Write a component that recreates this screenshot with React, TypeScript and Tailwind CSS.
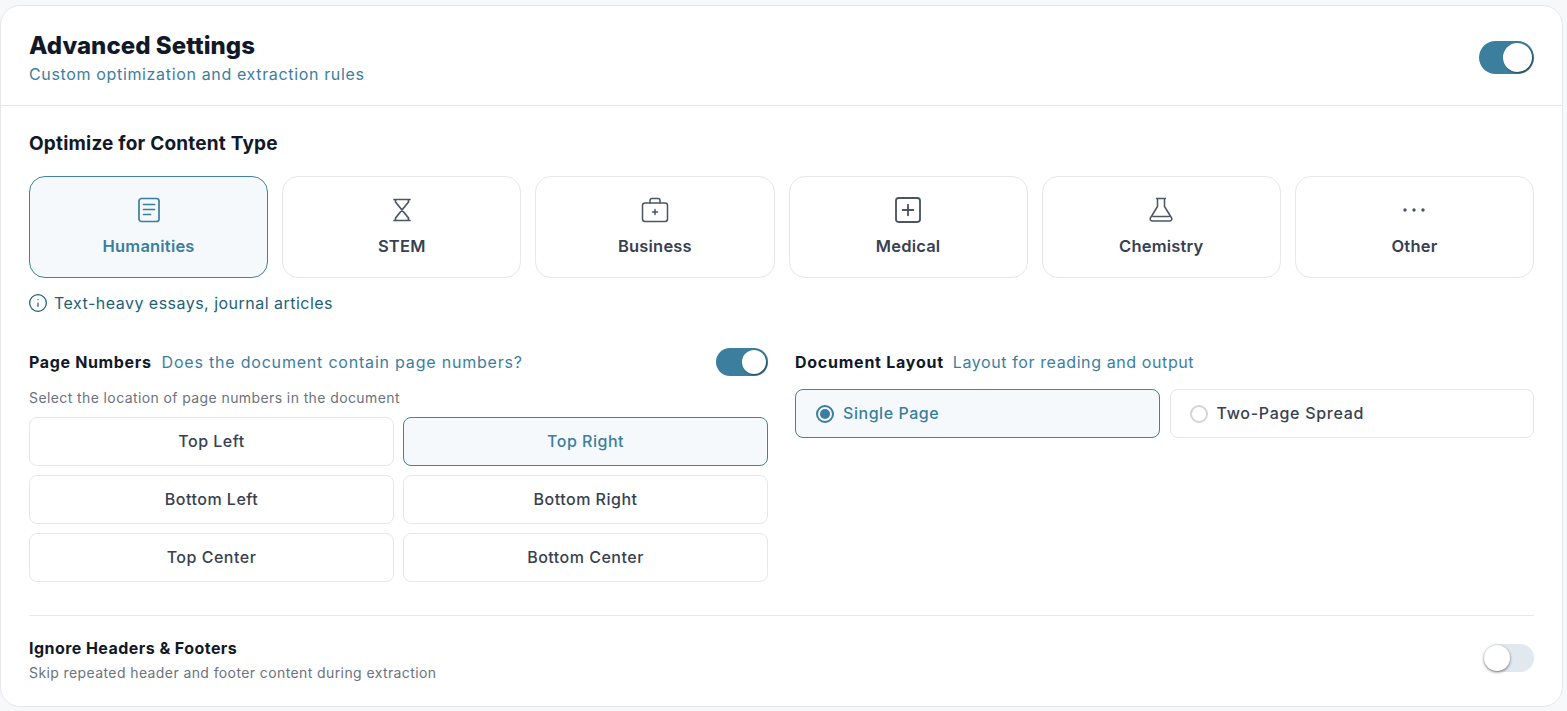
import { Info, SquarePlus } from "lucide-react";

const DocIcon = () => (
  <svg width="24" height="26" viewBox="0 0 24 26" fill="none" stroke="currentColor" strokeWidth="1.7" strokeLinecap="round">
    <rect x="2" y="1.5" width="20" height="23" rx="2.5" />
    <path d="M6.5 7.5h11M6.5 12.5h11M6.5 17.5h7" />
  </svg>
);

const HourglassIcon = () => (
  <svg width="24" height="24" viewBox="0 0 24 24" fill="none" stroke="currentColor" strokeWidth="1.7" strokeLinecap="round" strokeLinejoin="round">
    <path d="M4 1.5h16M4 22.5h16M5.5 1.5v2.5l13 16v2.5M18.5 1.5v2.5l-13 16v2.5" />
  </svg>
);

const MedkitIcon = () => (
  <svg width="28" height="26" viewBox="0 0 28 26" fill="none" stroke="currentColor" strokeWidth="1.5" strokeLinecap="round" strokeLinejoin="round">
    <rect x="1.5" y="6" width="25" height="18.5" rx="2.5" />
    <path d="M9 6V3.5a2 2 0 0 1 2-2h6a2 2 0 0 1 2 2V6M14 12.5v5M11.5 15h5" />
  </svg>
);

const FlaskIcon = () => (
  <svg width="26" height="26" viewBox="0 0 26 26" fill="none" stroke="currentColor" strokeWidth="1.5" strokeLinecap="round" strokeLinejoin="round">
    <path d="M8.5 1.5h9M9.5 1.5v8L2.4 21a2 2 0 0 0 1.7 3h17.8a2 2 0 0 0 1.7-3L16.5 9.5v-8M5 19.5h16" />
  </svg>
);

const DotsIcon = () => (
  <svg width="30" height="8" viewBox="0 0 30 8" fill="currentColor">
    <circle cx="6" cy="4" r="1.7" />
    <circle cx="15" cy="4" r="1.7" />
    <circle cx="24" cy="4" r="1.7" />
  </svg>
);

const contentTypes = [
  { label: "Humanities", icon: <DocIcon />, active: true },
  { label: "STEM", icon: <HourglassIcon /> },
  { label: "Business", icon: <MedkitIcon /> },
  { label: "Medical", icon: <SquarePlus size={32} strokeWidth={1.4} /> },
  { label: "Chemistry", icon: <FlaskIcon /> },
  { label: "Other", icon: <DotsIcon /> },
];

const locations = ["Top Left", "Top Right", "Bottom Left", "Bottom Right", "Top Center", "Bottom Center"];

const App = () => {
  return (
    <div className="h-[711px] overflow-hidden bg-[#f6f8fa] pt-[5px] font-['Inter',sans-serif]">
      <div className="h-[702px] w-[1563px] rounded-[20px] border border-[#e5e7eb] bg-white">
        <div className="flex h-[100px] justify-between border-b border-[#e5e7eb] px-[28px]">
          <div className="pt-[25px]">
            <h1 className="text-[24px] leading-[30px] font-extrabold tracking-[0.05px] text-[#111827]">Advanced Settings</h1>
            <p className="mt-[1px] text-[16px] leading-[24px] tracking-[0.65px] text-[#3b7e9e]">Custom optimization and extraction rules</p>
          </div>
          <div className="mt-[35px] flex h-[33px] w-[55px] items-center justify-end rounded-full bg-[#3b7e9e] pr-[2px]">
            <div className="size-[29px] rounded-full bg-white shadow-[1px_1px_2px_rgba(0,0,0,0.45)]" />
          </div>
        </div>

        <div className="px-[28px] pt-[25px]">
          <h2 className="text-[19px] leading-[26px] font-bold tracking-[0.2px] text-[#111827]">Optimize for Content Type</h2>

          <div className="mt-[19px] grid grid-cols-6 gap-[14px]">
            {contentTypes.map((t) => (
              <div
                key={t.label}
                className={`flex h-[102px] flex-col items-center rounded-[16px] border ${t.active ? "border-[#3f82a2] bg-[#f5f9fb] text-[#3b7e9e]" : "border-[#e5e7eb] bg-white text-[#374151]"}`}
              >
                <div className={`mt-[18px] flex h-[30px] items-center justify-center ${t.active ? "" : "text-[#4b5563]"}`}>{t.icon}</div>
                <span className="mt-[9px] text-[16.5px] leading-[24px] font-semibold tracking-[0.2px]">{t.label}</span>
              </div>
            ))}
          </div>

          <div className="mt-[13px] flex items-center gap-[6px] text-[#1f5f78]">
            <Info size={20} strokeWidth={1.5} className="-ml-[1px]" />
            <span className="text-[16px] leading-[24px] tracking-[0.48px]">Text-heavy essays, journal articles</span>
          </div>

          <div className="mt-[33px] grid grid-cols-2 gap-[27px]">
            <div>
              <div className="flex h-[28px] items-center justify-between">
                <div className="flex items-center gap-[10px]">
                  <span className="text-[16px] font-bold tracking-[0.65px] text-[#111827]">Page Numbers</span>
                  <span className="text-[16px] tracking-[0.8px] text-[#3b7e9e]">Does the document contain page numbers?</span>
                </div>
                <div className="flex h-[28px] w-[52px] items-center justify-end rounded-full bg-[#3b7e9e] pr-[2px]">
                  <div className="size-[24px] rounded-full bg-white shadow-[1px_1px_2px_rgba(0,0,0,0.45)]" />
                </div>
              </div>
              <p className="mt-[12px] text-[14px] leading-[20px] tracking-[0.4px] text-[#6b7280]">Select the location of page numbers in the document</p>
              <div className="mt-[9px] grid grid-cols-2 gap-[9px]">
                {locations.map((l) => {
                  const active = l === "Top Right";
                  return (
                    <div
                      key={l}
                      className={`flex h-[49px] items-center justify-center rounded-[8px] border pb-[2px] text-[16px] font-medium tracking-[0.5px] ${active ? "border-[#3f82a2] bg-[#f5f9fb] text-[#3b7e9e]" : "border-[#e5e7eb] bg-white text-[#374151]"}`}
                    >
                      {l}
                    </div>
                  );
                })}
              </div>
            </div>

            <div>
              <div className="flex h-[28px] items-center gap-[9px]">
                <span className="text-[16px] font-bold tracking-[0.75px] text-[#111827]">Document Layout</span>
                <span className="text-[16px] tracking-[0.6px] text-[#3b7e9e]">Layout for reading and output</span>
              </div>
              <div className="mt-[13px] grid grid-cols-2 gap-[10px]">
                <div className="flex h-[49px] items-center gap-[9px] rounded-[8px] border border-[#3f82a2] bg-[#f5f9fb] pl-[20px] text-[16px] font-medium tracking-[0.55px] text-[#3b7e9e]">
                  <span className="flex size-[18px] items-center justify-center rounded-full border-2 border-[#3b7e9e]">
                    <span className="size-[10px] rounded-full bg-[#3b7e9e]" />
                  </span>
                  <span className="pb-[2px]">Single Page</span>
                </div>
                <div className="flex h-[49px] items-center gap-[9px] rounded-[8px] border border-[#e5e7eb] bg-white pl-[19px] text-[16px] font-medium tracking-[0.7px] text-[#374151]">
                  <span className="size-[18px] rounded-full border-2 border-[#d1d5db]" />
                  <span className="pb-[2px]">Two-Page Spread</span>
                </div>
              </div>
            </div>
          </div>

          <div className="mt-[33px] flex items-center justify-between border-t border-[#e5e7eb] pt-[20px]">
            <div>
              <p className="text-[16px] leading-[24px] font-bold tracking-[0.45px] text-[#111827]">Ignore Headers &amp; Footers</p>
              <p className="mt-[3px] text-[14px] leading-[20px] tracking-[0.4px] text-[#6b7280]">Skip repeated header and footer content during extraction</p>
            </div>
            <div className="mb-[3px] flex h-[28px] w-[50px] items-center rounded-full bg-[#e2e8f0]">
              <div className="size-[26px] rounded-full bg-white shadow-[0_1px_3px_rgba(0,0,0,0.55)]" />
            </div>
          </div>
        </div>
      </div>
    </div>
  );
};

export default App;
